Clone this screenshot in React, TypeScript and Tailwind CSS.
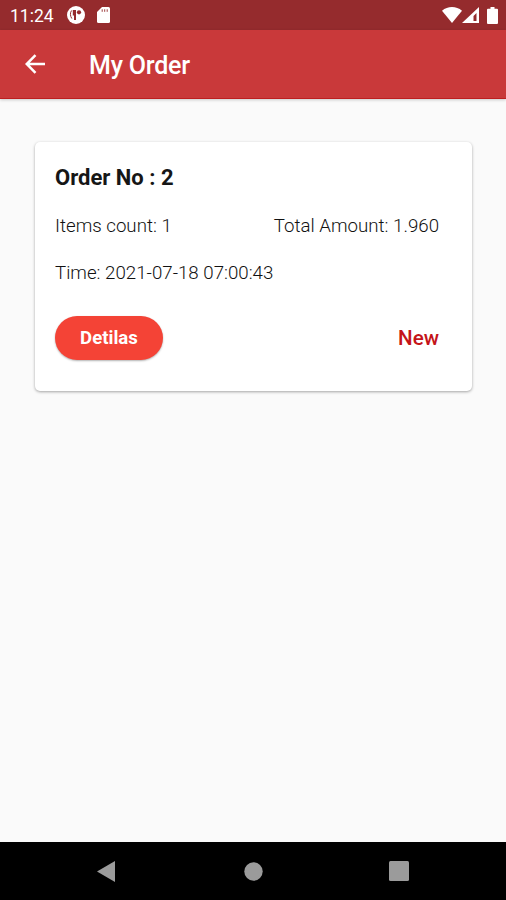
import React from 'react';

interface Order {
  id: number;
  itemsCount: number;
  totalAmount: string;
  time: string;
  status: string;
}

const orders: Order[] = [
  { id: 2, itemsCount: 1, totalAmount: '1.960', time: '2021-07-18 07:00:43', status: 'New' },
];

const StatusBar: React.FC = () => (
  <div className="flex h-[30px] shrink-0 items-center justify-between bg-[#952b2d] pr-2 pl-[10px] text-white">
    <div className="flex items-center">
      <span className="w-[44px] pt-px text-[17.5px] leading-[30px] whitespace-nowrap">11:24</span>
      {/* App notification */}
      <svg className="ml-[13px]" width="18" height="18" viewBox="0 0 18 18">
        <circle cx="9" cy="9" r="9" fill="#fff" />
        <path d="M5.8 4H9v10H7V9.500H5.800z" fill="#952b2d" />
        <path d="M4.600 4.500C3 6.500 3 10 4.800 12.500" stroke="#952b2d" strokeWidth="1" fill="none" />
        <circle cx="12" cy="6.3" r="2.1" fill="#952b2d" />
      </svg>
      {/* SD card */}
      <svg className="ml-3" width="13" height="16" viewBox="0 0 13 16">
        <path d="M5 0h6.5A1.5 1.5 0 0 1 13 1.5v13a1.5 1.5 0 0 1-1.5 1.5h-10A1.5 1.5 0 0 1 0 14.5V5z" fill="#fff" />
        <path d="M5.2 2.3v2.5M7.7 2.3v2.5M10.2 2.3v2.5" stroke="#952b2d" strokeWidth="0.9" />
      </svg>
    </div>
    <div className="flex items-center">
      <svg width="20" height="16" viewBox="0 0 21 16" preserveAspectRatio="none">
        <path d="M0 3.8C6-1.2 15-1.2 21 3.8L10.5 16z" fill="#fff" />
      </svg>
      <svg width="17" height="16" viewBox="0 0 17 16">
        <path fillRule="evenodd" d="M17 0v16H0zM14.5 6l-3 3v5h3z" fill="#fff" />
      </svg>
      <svg className="ml-2" width="11" height="17" viewBox="0 0 11 17">
        <path d="M3.5 0h4v1.7H10a1 1 0 0 1 1 1V16a1 1 0 0 1-1 1H1a1 1 0 0 1-1-1V2.7a1 1 0 0 1 1-1h2.5z" fill="#fff" />
      </svg>
    </div>
  </div>
);

const AppBar: React.FC = () => (
  <header className="z-10 flex h-[69px] shrink-0 items-center border-b border-[#bd1f20] bg-[#c9393a] pl-[25px] text-white shadow-[0_1px_3px_rgba(0,0,0,0.2)]">
    <button type="button" aria-label="Back">
      <svg width="20" height="20" viewBox="0 0 20 20" fill="none" stroke="#fff" strokeWidth="2.5">
        <path d="M20 10H2M10.5 1.2L1.7 10l8.8 8.8" />
      </svg>
    </button>
    <h1 className="ml-11 pt-1 text-[25px] leading-8 font-medium tracking-[-0.2px] whitespace-nowrap">My Order</h1>
  </header>
);

const OrderCard: React.FC<{ order: Order }> = ({ order }) => (
  <article className="h-[249px] rounded-[5px] bg-white pt-[22px] pr-[33px] pl-5 shadow-[0_1px_3px_rgba(0,0,0,0.35)]">
    <h2 className="text-[22px] leading-7 font-bold text-[#161616]">Order No : {order.id}</h2>
    <div className="mt-[22px] flex justify-between text-[18.7px] leading-6 font-light text-[#111]">
      <span>Items count: {order.itemsCount}</span>
      <span>Total Amount: {order.totalAmount}</span>
    </div>
    <p className="mt-[23px] text-[18.7px] leading-6 font-light text-[#111]">Time: {order.time}</p>
    <div className="mt-[31px] flex items-center justify-between">
      <button
        type="button"
        className="h-[44px] w-[108px] rounded-full bg-[#f44336] pt-px text-[18.6px] font-bold text-white shadow-[0_1px_2px_rgba(0,0,0,0.3)]"
      >
        Detilas
      </button>
      <span className="text-[20.6px] leading-7 font-medium text-[#c41419]">{order.status}</span>
    </div>
  </article>
);

const NavigationBar: React.FC = () => (
  <nav className="flex h-[58px] shrink-0 items-center justify-between bg-black pr-[97px] pl-[97px]">
    <svg width="18" height="21" viewBox="0 0 18 21">
      <path d="M18 0v21L0 10.5z" fill="#9b9b9b" />
    </svg>
    <svg className="ml-0.5" width="19" height="19" viewBox="0 0 19 19">
      <circle cx="9.5" cy="9.5" r="9.2" fill="#9b9b9b" />
    </svg>
    <svg width="20" height="20" viewBox="0 0 20 20">
      <rect width="20" height="20" rx="1.5" fill="#9b9b9b" />
    </svg>
  </nav>
);

const App: React.FC = () => {
  return (
    <div className="flex h-[900px] w-[506px] flex-col overflow-hidden bg-[#fafafa] font-['Roboto',sans-serif]">
      <StatusBar />
      <AppBar />
      <main className="flex-1 pt-[43px] pr-[34px] pl-[35px]">
        {orders.map((order) => (
          <OrderCard key={order.id} order={order} />
        ))}
      </main>
      <NavigationBar />
    </div>
  );
};

export default App;
